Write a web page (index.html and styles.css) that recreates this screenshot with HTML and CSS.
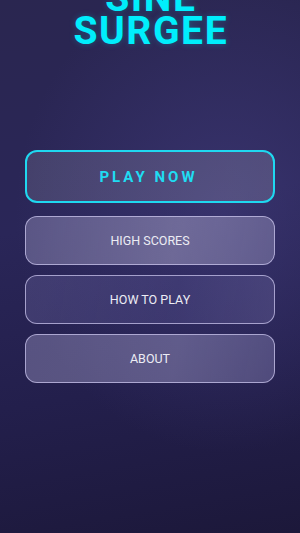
FILE: index.html
```html
<!DOCTYPE html>
<html>
<head>
<meta charset="utf-8">
<link rel="stylesheet" href="styles.css">
</head>
<body>
<div class="screen">
  <h1 class="title">SINE<br>SURGEE</h1>
  <div class="menu">
    <button class="btn btn-play">PLAY NOW</button>
    <button class="btn btn-glass btn-a">HIGH SCORES</button>
    <button class="btn btn-glass btn-b">HOW TO PLAY</button>
    <button class="btn btn-glass btn-c">ABOUT</button>
  </div>
</div>
</body>
</html>
```
FILE: styles.css
```css
html, body {
  margin: 0;
  padding: 0;
  height: 100%;
  overflow: hidden;
}
body {
  font-family: Roboto, "Liberation Sans", sans-serif;
  background:
    radial-gradient(ellipse 70% 45% at 75% 40%, rgba(70, 64, 130, 0.5), rgba(70, 64, 130, 0) 100%),
    linear-gradient(170deg, #2a2650 0%, #2a2658 40%, #231f4c 70%, #1c183a 100%);
}
.screen {
  display: flex;
  flex-direction: column;
  align-items: stretch;
  padding: 0 25px;
}
.title {
  margin: -18px 0 0 0;
  font-size: 39px;
  line-height: 33px;
  font-weight: 700;
  letter-spacing: 1.6px;
  padding-left: 1.6px;
  text-align: center;
  color: #00eefc;
  text-shadow: 0 0 6px rgba(0, 230, 255, 0.25);
}
.menu {
  display: flex;
  flex-direction: column;
  gap: 10px;
  margin-top: 102px;
}
.btn {
  font-family: Roboto, "Liberation Sans", sans-serif;
  display: flex;
  align-items: center;
  justify-content: center;
  border-radius: 12px;
  box-sizing: border-box;
  cursor: pointer;
}
.btn-play {
  height: 53px;
  margin-bottom: 3px;
  border: 2px solid #1fd8f0;
  background: linear-gradient(100deg, rgba(255,255,255,0.12), rgba(255,255,255,0.15));
  color: #1fdcf2;
  font-size: 15px;
  font-weight: 700;
  letter-spacing: 3px;
  padding-left: 3px;
}
.btn-glass {
  height: 49px;
  border: 1px solid rgba(200, 195, 235, 0.75);
  color: #ececf4;
  font-size: 12.5px;
  font-weight: 400;
}
.btn-a {
  background: linear-gradient(100deg, rgba(130,125,170,0.55) 0%, rgba(150,145,185,0.6) 60%, rgba(135,130,175,0.55) 100%);
}
.btn-b {
  background: linear-gradient(100deg, rgba(90,85,140,0.5) 0%, rgba(80,75,135,0.45) 60%, rgba(95,90,145,0.5) 100%);
}
.btn-c {
  background: linear-gradient(100deg, rgba(130,125,170,0.55) 0%, rgba(140,135,180,0.55) 60%, rgba(120,115,165,0.5) 100%);
}
```
